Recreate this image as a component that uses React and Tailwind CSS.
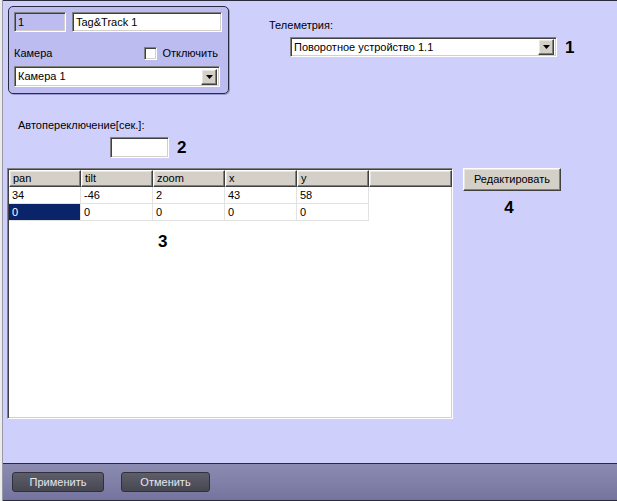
import React from 'react';

const sunken =
  'border border-t-[#808080] border-l-[#808080] border-r-white border-b-white shadow-[inset_1px_1px_0_#404040,inset_-1px_-1px_0_#d4d0c8]';
const raised =
  'border border-t-white border-l-white border-r-[#404040] border-b-[#404040] shadow-[inset_-1px_-1px_0_#808080,inset_1px_1px_0_#e8e6e0]';

function Arrow() {
  return (
    <div className={`w-[16px] h-[16px] bg-[#d4d0c8] flex items-center justify-center ${raised}`}>
      <svg width="7" height="4" viewBox="0 0 7 4">
        <path d="M0 0h7L3.5 4z" fill="#000" />
      </svg>
    </div>
  );
}

function Combo({ value, className }) {
  return (
    <div className={`flex items-center bg-white pl-[3px] pr-[2px] ${sunken} ${className}`}>
      <span className="flex-1 leading-none">{value}</span>
      <Arrow />
    </div>
  );
}

const cols = ['pan', 'tilt', 'zoom', 'x', 'y'];
const rows = [
  ['34', '-46', '2', '43', '58'],
  ['0', '0', '0', '0', '0'],
];

function Grid() {
  return (
    <div className={`relative w-[446px] h-[251px] bg-white ${sunken} flex flex-col`}>
      <div className="flex h-[17px] mt-[1px] ml-[1px] bg-[#d4d0c8] shrink-0">
        {cols.map((c) => (
          <div key={c} className={`w-[72px] h-full pl-[3px] flex items-center ${raised}`}>
            {c}
          </div>
        ))}
        <div className={`flex-1 h-full ${raised}`} />
      </div>
      {rows.map((r, i) => (
        <div key={i} className="flex h-[17px] ml-[1px] shrink-0">
          {r.map((v, j) => {
            const sel = i === 1 && j === 0;
            return (
              <div
                key={j}
                className={`w-[72px] h-full pl-[3px] flex items-center border-r border-b border-[#e2e2e2] ${
                  sel ? 'bg-[#0a246a] text-white' : ''
                }`}
              >
                {v}
              </div>
            );
          })}
        </div>
      ))}
      <div className="ml-[150px] mt-[12px] text-[17px] font-bold leading-none">3</div>
    </div>
  );
}

export default function App() {
  return (
    <div className="w-[617px] h-[501px] flex overflow-hidden text-[11px] text-black font-['Liberation_Sans',Arial,sans-serif]">
      <div className="w-[2px] h-full bg-[#ececec]" />
      <div className="flex-1 flex flex-col border-l border-[#9898a8]">
        <div className="flex-1 flex flex-col bg-[#cfcffb] border-t border-[#2a2a38]">
          {/* top row */}
          <div className="flex items-start">
            <div className="ml-[5px] mt-[5px] w-[221px] h-[88px] rounded-[5px] border border-[#2b2b40] bg-[#bcbcf0] shadow-[1px_1px_0_#9a9ad0] px-[5px] pt-[5px]">
              <div className="flex gap-[6px]">
                <div className={`w-[52px] h-[20px] bg-[#bcbcf0] pl-[3px] flex items-center ${sunken}`}>1</div>
                <div className={`w-[150px] h-[20px] bg-white pl-[3px] flex items-center ${sunken}`}>Tag&amp;Track 1</div>
              </div>
              <div className="flex items-center h-[14px] mt-[14px]">
                <span className="flex-1">Камера</span>
                <div className={`w-[13px] h-[13px] bg-white ${sunken}`} />
                <span className="ml-[5px] mr-[5px]">Отключить</span>
              </div>
              <Combo value="Камера 1" className="w-[206px] h-[21px] mt-[6px]" />
            </div>
            <div className="ml-[40px] mt-[18px] flex flex-col">
              <div className="h-[13px] leading-[13px]">Телеметрия:</div>
              <div className="flex items-center ml-[21px] mt-[5px]">
                <Combo value="Поворотное устройство 1.1" className="w-[267px] h-[20px]" />
                <span className="ml-[8px] text-[17px] font-bold leading-none">1</span>
              </div>
            </div>
          </div>

          {/* autoswitch */}
          <div className="ml-[15px] mt-[25px] h-[13px] leading-[13px]">Автопереключение[сек.]:</div>
          <div className="flex items-center ml-[107px] mt-[5px]">
            <div className={`w-[59px] h-[21px] bg-white ${sunken}`} />
            <span className="ml-[8px] text-[17px] font-bold leading-none">2</span>
          </div>

          {/* table row */}
          <div className="flex items-start ml-[4px] mt-[10px]">
            <Grid />
            <div className="ml-[10px] flex flex-col items-center">
              <button className={`w-[98px] h-[23px] bg-[#d4d0c8] flex items-center justify-center ${raised}`}>
                Редактировать
              </button>
              <span className="mt-[8px] mr-[6px] text-[17px] font-bold leading-none">4</span>
            </div>
          </div>
        </div>

        {/* bottom bar */}
        <div className="h-[38px] shrink-0 flex items-start border-t border-b border-[#2a2a3a] bg-gradient-to-b from-[#8c8cb2] to-[#74749e]">
          <button className="ml-[9px] mt-[8px] w-[92px] h-[20px] rounded-[3px] border border-[#30303c] bg-gradient-to-b from-[#5e5e6a] to-[#474752] text-[#e6e6ee] flex items-center justify-center">
            Применить
          </button>
          <button className="ml-[17px] mt-[8px] w-[89px] h-[20px] rounded-[3px] border border-[#30303c] bg-gradient-to-b from-[#5e5e6a] to-[#474752] text-[#e6e6ee] flex items-center justify-center">
            Отменить
          </button>
        </div>
      </div>
    </div>
  );
}
